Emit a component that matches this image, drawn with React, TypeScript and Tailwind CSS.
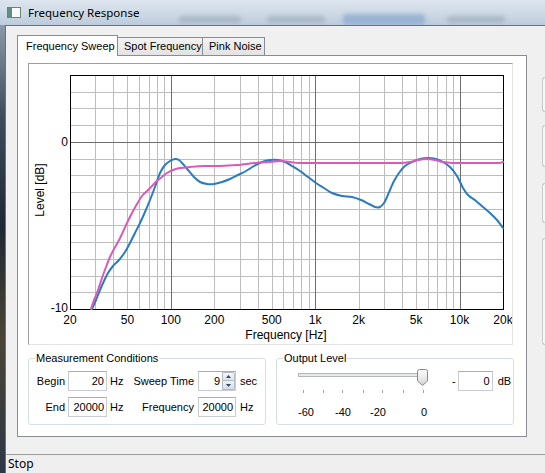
import React from "react";

const SX = 29;
const SY = 64;
const PX0 = 41;
const PY0 = 11;
const PW = 433;
const PH = 234;
const X = (f: number) => PX0 + (PW / 3) * Math.log10(f / 20);
const Y = (db: number) => PY0 + (4 - db) * (PH / 14);

const blueS: number[][] = [
  [92, 309], [96, 300], [100, 290], [104, 281], [108, 273], [113, 266], [119, 260], [125, 252],
  [130, 243], [135, 233], [140, 223], [145, 212], [150, 200], [155, 187], [160, 173], [165, 165],
  [170, 161], [175, 159], [179, 160], [183, 164], [188, 170], [194, 177], [200, 182], [207, 184],
  [214, 184], [222, 182], [230, 179], [238, 175], [246, 171], [254, 166], [262, 162], [270, 160],
  [278, 160], [285, 162], [292, 166], [300, 171], [308, 177], [316, 183], [324, 188], [332, 193],
  [342, 196], [352, 197], [361, 200], [369, 204], [375, 207], [380, 207], [384, 203], [387, 197],
  [390, 190], [394, 181], [399, 173], [405, 166], [412, 162], [420, 159], [428, 158], [436, 159],
  [443, 162], [450, 167], [457, 176], [463, 188], [468, 195], [476, 201], [483, 207], [490, 213],
  [497, 220], [503, 228],
];

const pinkS: number[][] = [
  [91, 309], [94, 300], [98, 290], [102, 278], [106, 267], [110, 257], [114, 249], [118, 242],
  [122, 234], [127, 223], [132, 213], [137, 204], [142, 196], [147, 191], [152, 186], [157, 181],
  [162, 177], [167, 173], [173, 170], [180, 168], [190, 167], [205, 166], [220, 166], [237, 165],
  [255, 163], [270, 162], [280, 161], [290, 162], [300, 163], [320, 163], [350, 163], [380, 163],
  [400, 163], [410, 162], [418, 160], [427, 159], [435, 160], [443, 162], [452, 163], [470, 163],
  [490, 163], [499, 163], [503, 162],
];

function smooth(src: number[][]): string {
  const pts = src.map(([x, y]) => [x - SX, y - SY]);
  let d = `M${pts[0][0]} ${pts[0][1]}`;
  for (let i = 0; i < pts.length - 1; i++) {
    const p0 = pts[Math.max(i - 1, 0)];
    const p1 = pts[i];
    const p2 = pts[i + 1];
    const p3 = pts[Math.min(i + 2, pts.length - 1)];
    const c1x = p1[0] + (p2[0] - p0[0]) / 6;
    const c1y = p1[1] + (p2[1] - p0[1]) / 6;
    const c2x = p2[0] - (p3[0] - p1[0]) / 6;
    const c2y = p2[1] - (p3[1] - p1[1]) / 6;
    d += ` C${c1x.toFixed(2)} ${c1y.toFixed(2)} ${c2x.toFixed(2)} ${c2y.toFixed(2)} ${p2[0]} ${p2[1]}`;
  }
  return d;
}

function Chart() {
  const lightF = [30, 40, 50, 60, 70, 80, 90, 200, 300, 400, 500, 600, 700, 800, 900, 2000, 3000, 4000, 5000, 6000, 7000, 8000, 9000];
  const darkF = [100, 1000, 10000];
  const dbs = [3, 2, 1, -1, -2, -3, -4, -5, -6, -7, -8, -9];
  const ticks: [number, string][] = [
    [20, "20"], [50, "50"], [100, "100"], [200, "200"], [500, "500"],
    [1000, "1k"], [2000, "2k"], [5000, "5k"], [10000, "10k"], [20000, "20k"],
  ];
  const r = (v: number) => Math.round(v) + 0.5;
  const left = PX0 + 0.5;
  const right = PX0 + PW + 0.5;
  const top = PY0 + 0.5;
  const bottom = PY0 + PH + 0.5;
  return (
    <svg width={483} height={280} className="block font-['Liberation_Sans',Arial,sans-serif]">
      <defs>
        <clipPath id="plotclip">
          <rect x={PX0} y={PY0} width={PW + 1} height={PH + 1} />
        </clipPath>
      </defs>
      <g shapeRendering="crispEdges">
        {lightF.map((f) => (
          <line key={f} x1={r(X(f))} x2={r(X(f))} y1={top} y2={bottom} stroke="#bdbdbd" strokeWidth={1} />
        ))}
        {dbs.map((d) => (
          <line key={d} x1={left} x2={right} y1={r(Y(d))} y2={r(Y(d))} stroke="#bdbdbd" strokeWidth={1} />
        ))}
        {darkF.map((f) => (
          <line key={f} x1={r(X(f))} x2={r(X(f))} y1={top} y2={bottom} stroke="#6e6e6e" strokeWidth={1} />
        ))}
        <line x1={left} x2={right} y1={r(Y(0))} y2={r(Y(0))} stroke="#6e6e6e" strokeWidth={1} />
        <rect x={left} y={top} width={PW} height={PH} fill="none" stroke="#000" strokeWidth={1} />
      </g>
      <g clipPath="url(#plotclip)" fill="none" strokeLinejoin="round" strokeLinecap="round">
        <path d={smooth(blueS)} stroke="#2a7bbf" strokeWidth={2} />
        <path d={smooth(pinkS)} stroke="#d95bb8" strokeWidth={2} />
      </g>
      <g fontSize={12} fill="#000">
        <text x={39} y={Y(0) + 4} textAnchor="end">0</text>
        <text x={39} y={Y(-10) + 3} textAnchor="end">-10</text>
        {ticks.map(([f, l]) => (
          <text key={l} x={X(f)} y={260} textAnchor="middle">{l}</text>
        ))}
        <text x={257} y={275} textAnchor="middle">Frequency [Hz]</text>
        <text transform="translate(15,126) rotate(-90)" textAnchor="middle">Level [dB]</text>
      </g>
    </svg>
  );
}

function TextBox({ value, w, ml }: { value: string; w: string; ml: string }) {
  return (
    <div className={`${w} ${ml} h-[20px] bg-white border border-[#c9ccd2] border-t-[#abadb3] text-right pr-[2px] leading-[18px]`}>
      {value}
    </div>
  );
}

function SpinBox() {
  return (
    <div className="ml-[4px] w-[38px] h-[20px] bg-white border border-[#c9ccd2] border-t-[#abadb3] flex">
      <div className="flex-1 text-right pr-[2px] leading-[18px]">9</div>
      <div className="w-[13px] flex flex-col">
        <div className="h-[9px] border border-[#b3bac3] rounded-tr-[2px] bg-[linear-gradient(180deg,#f4f7fa,#dbe3ec)] flex items-center justify-center">
          <svg width="5" height="3" className="block"><path d="M0 3 L2.5 0 L5 3 Z" fill="#3a4653" /></svg>
        </div>
        <div className="h-[9px] border border-t-0 border-[#b3bac3] rounded-br-[2px] bg-[linear-gradient(180deg,#eef2f6,#d5dee8)] flex items-center justify-center">
          <svg width="5" height="3" className="block"><path d="M0 0 L5 0 L2.5 3 Z" fill="#3a4653" /></svg>
        </div>
      </div>
    </div>
  );
}

function Slider() {
  const tx = [13.5, 33.5, 52.5, 73.5, 92.5, 113.5, 133.5];
  return (
    <svg width={142} height={56} className="block ml-[13px] font-['Liberation_Sans',Arial,sans-serif]">
      <defs>
        <linearGradient id="thumbg" x1="0" y1="0" x2="0" y2="1">
          <stop offset="0" stopColor="#fbfbfb" />
          <stop offset="0.55" stopColor="#e9e9e9" />
          <stop offset="1" stopColor="#cfcfcf" />
        </linearGradient>
      </defs>
      <rect x={8.5} y={8.5} width={124} height={3} fill="#e7eaea" stroke="#b4b7b9" shapeRendering="crispEdges" />
      {tx.map((x) => (
        <line key={x} x1={x} x2={x} y1={25} y2={28} stroke="#a3a3a3" shapeRendering="crispEdges" />
      ))}
      <path d="M127.5 6.5 Q127.5 4.5 129.5 4.5 L135.5 4.5 Q137.5 4.5 137.5 6.5 L137.5 16 L132.5 20.5 L127.5 16 Z" fill="url(#thumbg)" stroke="#8a8a8a" />
      <g fontSize={11} fill="#000">
        <text x={8} y={51}>-60</text>
        <text x={45} y={51}>-40</text>
        <text x={80} y={51}>-20</text>
        <text x={131} y={51}>0</text>
      </g>
    </svg>
  );
}

function Row({ l1, v1, l2, right, unit2 }: { l1: string; v1: string; l2: string; right: React.ReactNode; unit2: string }) {
  return (
    <div className="flex items-center h-[20px]">
      <span className="w-[36px] text-right">{l1}</span>
      <TextBox value={v1} w="w-[39px]" ml="ml-[3px]" />
      <span className="ml-[3px] w-[17px]">Hz</span>
      <span className="w-[67px] text-right">{l2}</span>
      {right}
      <span className="ml-[4px]">{unit2}</span>
    </div>
  );
}

function TitleBar() {
  return (
    <div className="h-[25px] shrink-0 flex items-center overflow-hidden bg-[linear-gradient(180deg,#dce5ee_0%,#cdd9e5_55%,#bccbdb_100%)]">
      <svg width="14" height="11" className="ml-[7px] block shrink-0">
        <rect x="0.5" y="0.5" width="13" height="10" fill="#f7f9f8" stroke="#6f7f80" />
        <rect x="1" y="1" width="4" height="9" fill="#5e8f80" />
      </svg>
      <span className="ml-[7px] font-['Noto_Sans',sans-serif] text-[11.5px] text-black shrink-0 leading-none">Frequency Response</span>
      <div className="ml-[40px] self-end mb-[2px] w-[62px] h-[7px] rounded-full bg-[#98a8b8] opacity-60 blur-[2px] shrink-0" />
      <div className="ml-[26px] self-end mb-[2px] w-[58px] h-[7px] rounded-full bg-[#98a8b8] opacity-60 blur-[2px] shrink-0" />
      <div className="ml-[18px] self-end mb-[0px] w-[82px] h-[11px] rounded-[3px] bg-[#88a6cc] opacity-70 blur-[2px] shrink-0" />
      <div className="ml-[22px] self-end mb-[2px] w-[58px] h-[7px] rounded-full bg-[#98a8b8] opacity-60 blur-[2px] shrink-0" />
    </div>
  );
}

function RightStrip() {
  return (
    <div className="flex-1 flex flex-col pl-[15px]">
      <div className="mt-[51px] h-[35px] border border-r-0 border-[#c8c8c8] rounded-l-[3px] bg-[#f8f8f8]" />
      <div className="mt-[13px] h-[42px] border border-r-0 border-[#c8c8c8] rounded-l-[3px] bg-[#f8f8f8]" />
      <div className="mt-[16px] h-[40px] border border-r-0 border-[#c8c8c8] rounded-l-[3px] bg-[#f8f8f8]" />
      <div className="mt-[15px] h-[107px] border border-r-0 border-[#c8c8c8] rounded-l-[3px] bg-[#f8f8f8]" />
    </div>
  );
}

export default function App() {
  return (
    <div className="w-[545px] h-[473px] overflow-hidden flex flex-col font-['Liberation_Sans',Arial,sans-serif] text-[11px] text-black select-none">
      <TitleBar />
      <div className="flex-1 flex min-h-0">
        <div className="w-[5px] shrink-0 bg-[linear-gradient(180deg,#8c9aa7_0%,#3f4d5d_20%,#1f2833_45%,#4a4437_70%,#2c3745_100%)]" />
        <div className="flex-1 flex flex-col min-w-0 border-l border-t border-[#67727e] bg-[#f0f0f0]">
          <div className="flex-1 flex min-h-0">
            <div className="ml-[11px] mt-[9px] w-[510px] shrink-0 flex flex-col">
              <div className="flex items-end h-[20px] relative z-10">
                <div className="h-[21px] w-[101px] -mb-px bg-white border border-b-0 border-[#898c95] pl-[8px] flex items-center">
                  Frequency Sweep
                </div>
                <div className="h-[18px] w-[85px] border-t border-r border-[#898c95] bg-[linear-gradient(180deg,#f3f3f3,#e3e3e3)] pl-[6px] flex items-center">
                  Spot Frequency
                </div>
                <div className="h-[18px] w-[62px] border-t border-r border-[#898c95] bg-[linear-gradient(180deg,#f3f3f3,#e3e3e3)] pl-[6px] flex items-center">
                  Pink Noise
                </div>
              </div>
              <div className="h-[382px] bg-white border border-[#898c95] pl-[10px] pt-[7px]">
                <div className="w-[485px] h-[282px] border border-[#e3e3e3] border-t-[#a0a0a0] border-l-[#a0a0a0]">
                  <Chart />
                </div>
                <div className="flex gap-[10px] mt-[7px]">
                  <fieldset className="w-[238px] h-[73px] m-0 p-0 min-w-0 border border-[#d5dfe5] rounded-[3px]">
                    <legend className="ml-[6px] px-[1px] leading-[13px]">Measurement Conditions</legend>
                    <div className="pt-[6px] flex flex-col gap-[6px]">
                      <Row l1="Begin" v1="20" l2="Sweep Time" right={<SpinBox />} unit2="sec" />
                      <Row l1="End" v1="20000" l2="Frequency" right={<TextBox value="20000" w="w-[38px]" ml="ml-[4px]" />} unit2="Hz" />
                    </div>
                  </fieldset>
                  <fieldset className="w-[238px] h-[73px] m-0 p-0 min-w-0 border border-[#d5dfe5] rounded-[3px]">
                    <legend className="ml-[6px] px-[1px] leading-[13px]">Output Level</legend>
                    <div className="flex items-start">
                      <Slider />
                      <div className="ml-[20px] mt-[6px] h-[20px] flex items-center">
                        <span>-</span>
                        <TextBox value="0" w="w-[35px]" ml="ml-[2px]" />
                        <span className="ml-[5px]">dB</span>
                      </div>
                    </div>
                  </fieldset>
                </div>
              </div>
            </div>
            <RightStrip />
          </div>
          <div className="h-[19px] shrink-0 border-t border-[#9c9c9c] bg-[#f0efef] flex items-center pl-[2px] font-['Noto_Sans',sans-serif] text-[12px]">
            Stop
          </div>
        </div>
      </div>
    </div>
  );
}
